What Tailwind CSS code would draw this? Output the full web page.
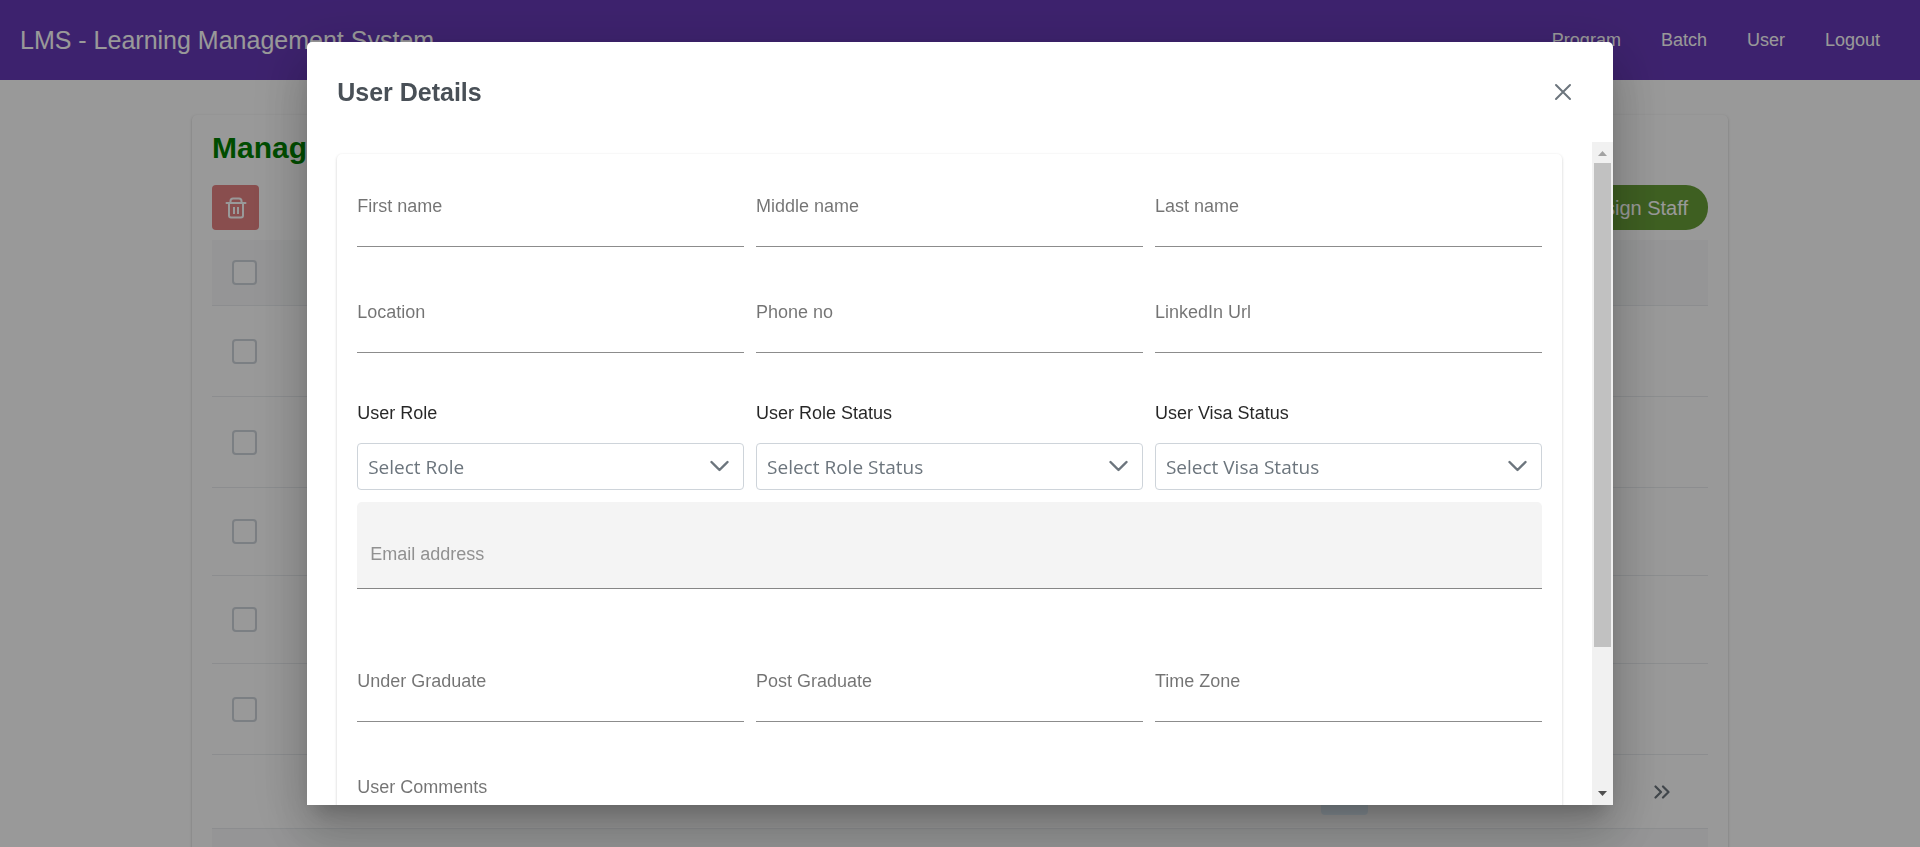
<!DOCTYPE html>
<html lang="en">
<head>
<meta charset="utf-8">
<title>LMS - Learning Management System</title>
<script src="https://cdn.jsdelivr.net/npm/@tailwindcss/browser@4"></script>
</head>
<body class="h-screen overflow-hidden bg-white font-['Liberation_Sans',Arial,sans-serif] text-lg text-black/85">

<header class="flex h-20 items-center justify-between bg-[#673ab7] pl-5 pr-10 text-white">
  <h1 class="text-[25px]">LMS - Learning Management System</h1>
  <nav class="flex gap-10">
    <a href="#program">Program</a>
    <a href="#batch">Batch</a>
    <a href="#user">User</a>
    <a href="#logout">Logout</a>
  </nav>
</header>

<main class="mx-auto mt-[35px] w-4/5 rounded-[5px] bg-white p-5 pb-10 shadow-[0_1px_3px_rgba(0,0,0,0.22)]">
  <h2 class="-mt-1 text-3xl leading-[34px] font-bold text-[#008000]">Manage User</h2>
  <div class="mt-5 flex justify-between">
    <button type="button" aria-label="Delete selected users" class="flex h-[45px] w-[47px] items-center justify-center rounded-[4px] bg-[#e58282] text-white">
      <svg class="size-[22px]" viewBox="0 0 22 22" fill="none" stroke="currentColor" stroke-width="2" stroke-linejoin="round" stroke-linecap="round">
        <path d="M1.500 6h19M4 6v12.500q0 2 2 2h10q2 0 2-2V6M5.500 6V4q0-2.500 2.500-2.500h6q2.500 0 2.500 2.500V6"/>
        <path stroke-linecap="butt" d="M9 10v7M13 10v7"/>
      </svg>
    </button>
    <button type="button" class="h-[45px] rounded-[22px] bg-[#689f38] px-5 text-xl text-white">+ Assign Staff</button>
  </div>

  <table class="mt-2.5 w-full border-separate border-spacing-0">
    <thead>
      <tr class="h-[66px] bg-[#f8f9fa]">
        <th class="border-b border-[#e9ecef] px-5 text-left"><input type="checkbox" aria-label="Select all users" class="block size-[25px] appearance-none rounded-[4px] border-2 border-[#ced4da] bg-white"></th>
      </tr>
    </thead>
    <tbody>
      <tr class="h-[91px]"><td class="border-b border-[#e9ecef] px-5"><input type="checkbox" aria-label="Select user 1" class="block size-[25px] appearance-none rounded-[4px] border-2 border-[#ced4da] bg-white"></td></tr>
      <tr class="h-[91px]"><td class="border-b border-[#e9ecef] px-5"><input type="checkbox" aria-label="Select user 2" class="block size-[25px] appearance-none rounded-[4px] border-2 border-[#ced4da] bg-white"></td></tr>
      <tr class="h-[88px]"><td class="border-b border-[#e9ecef] px-5"><input type="checkbox" aria-label="Select user 3" class="block size-[25px] appearance-none rounded-[4px] border-2 border-[#ced4da] bg-white"></td></tr>
      <tr class="h-[88px]"><td class="border-b border-[#e9ecef] px-5"><input type="checkbox" aria-label="Select user 4" class="block size-[25px] appearance-none rounded-[4px] border-2 border-[#ced4da] bg-white"></td></tr>
      <tr class="h-[91px]"><td class="border-b border-[#e9ecef] px-5"><input type="checkbox" aria-label="Select user 5" class="block size-[25px] appearance-none rounded-[4px] border-2 border-[#ced4da] bg-white"></td></tr>
    </tbody>
  </table>

  <div class="flex h-[74px] items-center justify-end border-b border-[#e9ecef] pr-[23px]">
    <button type="button" aria-label="Current page" class="mr-[270px] h-[47px] w-[47px] rounded-[4px] bg-[#e3f2fd]"></button>
    <button type="button" aria-label="Last page" class="flex h-[47px] w-[47px] items-center justify-center text-[#6c757d]">
      <svg class="h-3.5 w-4" viewBox="0 0 16 14" fill="none" stroke="currentColor" stroke-width="2.200" stroke-linecap="round" stroke-linejoin="round">
        <path d="M1.500 1.500L7 7l-5.500 5.500M9 1.500L14.500 7 9 12.500"/>
      </svg>
    </button>
  </div>
  <footer class="h-16 bg-[#f8f9fa]"></footer>
</main>

<div class="fixed inset-0 flex items-center justify-center bg-black/40">
  <section role="dialog" aria-modal="true" aria-labelledby="dialog-title" class="flex h-[90vh] w-[68vw] flex-col rounded-t-[5px] bg-white shadow-[0_14px_19px_-9px_rgba(0,0,0,0.2),0_30px_48px_4px_rgba(0,0,0,0.14),0_11px_58px_10px_rgba(0,0,0,0.12)]">
    <div class="flex h-[100px] shrink-0 items-start justify-between px-[30px] pt-[30px]">
      <h2 id="dialog-title" class="text-[25px] leading-10 font-bold text-[#495057]">User Details</h2>
      <button type="button" aria-label="Close" class="flex size-10 items-center justify-center text-[#6c757d]">
        <svg class="size-[18px]" viewBox="0 0 18 18" fill="none" stroke="currentColor" stroke-width="2" stroke-linecap="round"><path d="M2 2l14 14M16 2L2 16"/></svg>
      </button>
    </div>

    <div class="flex min-h-0 flex-1">
      <div class="flex-1 overflow-y-auto px-[30px] pt-3 pb-[30px] [scrollbar-width:none]">
        <form class="rounded-[5px] px-5 pt-10 pb-5 text-black/55 shadow-[0_1px_3px_rgba(0,0,0,0.2)]">
          <div class="grid grid-cols-3 gap-x-3 gap-y-[53px]">
            <div class="flex flex-col">
              <label for="first-name" class="leading-6">First name</label>
              <input id="first-name" type="text" class="h-[29px] border-b border-black/45 outline-none">
            </div>
            <div class="flex flex-col">
              <label for="middle-name" class="leading-6">Middle name</label>
              <input id="middle-name" type="text" class="h-[29px] border-b border-black/45 outline-none">
            </div>
            <div class="flex flex-col">
              <label for="last-name" class="leading-6">Last name</label>
              <input id="last-name" type="text" class="h-[29px] border-b border-black/45 outline-none">
            </div>
            <div class="flex flex-col">
              <label for="location" class="leading-6">Location</label>
              <input id="location" type="text" class="h-[29px] border-b border-black/45 outline-none">
            </div>
            <div class="flex flex-col">
              <label for="phone" class="leading-6">Phone no</label>
              <input id="phone" type="tel" class="h-[29px] border-b border-black/45 outline-none">
            </div>
            <div class="flex flex-col">
              <label for="linkedin" class="leading-6">LinkedIn Url</label>
              <input id="linkedin" type="url" class="h-[29px] border-b border-black/45 outline-none">
            </div>
          </div>

          <div class="mt-12 grid grid-cols-3 gap-3">
            <div>
              <label for="role" class="mb-[18px] block leading-6 text-black/85">User Role</label>
              <div class="relative">
                <select id="role" class="block h-[47px] w-full appearance-none rounded-[4px] border border-[#ced4da] bg-white px-2.5 pt-0.5 font-['Open_Sans',sans-serif] text-[19px] text-[#6c757d]"><option>Select Role</option></select>
                <svg class="pointer-events-none absolute top-[17px] right-[14px] h-3 w-5 text-[#6c757d]" viewBox="0 0 20 12" fill="none" stroke="currentColor" stroke-width="2.400" stroke-linecap="round" stroke-linejoin="round"><path d="M1.500 2l8 8 8-8"/></svg>
              </div>
            </div>
            <div>
              <label for="role-status" class="mb-[18px] block leading-6 text-black/85">User Role Status</label>
              <div class="relative">
                <select id="role-status" class="block h-[47px] w-full appearance-none rounded-[4px] border border-[#ced4da] bg-white px-2.5 pt-0.5 font-['Open_Sans',sans-serif] text-[19px] text-[#6c757d]"><option>Select Role Status</option></select>
                <svg class="pointer-events-none absolute top-[17px] right-[14px] h-3 w-5 text-[#6c757d]" viewBox="0 0 20 12" fill="none" stroke="currentColor" stroke-width="2.400" stroke-linecap="round" stroke-linejoin="round"><path d="M1.500 2l8 8 8-8"/></svg>
              </div>
            </div>
            <div>
              <label for="visa-status" class="mb-[18px] block leading-6 text-black/85">User Visa Status</label>
              <div class="relative">
                <select id="visa-status" class="block h-[47px] w-full appearance-none rounded-[4px] border border-[#ced4da] bg-white px-2.5 pt-0.5 font-['Open_Sans',sans-serif] text-[19px] text-[#6c757d]"><option>Select Visa Status</option></select>
                <svg class="pointer-events-none absolute top-[17px] right-[14px] h-3 w-5 text-[#6c757d]" viewBox="0 0 20 12" fill="none" stroke="currentColor" stroke-width="2.400" stroke-linecap="round" stroke-linejoin="round"><path d="M1.500 2l8 8 8-8"/></svg>
              </div>
            </div>
          </div>

          <input type="email" aria-label="Email address" placeholder="Email address" class="mt-3 block h-[87px] w-full rounded-t-[5px] border-b border-black/45 bg-[#f4f4f4] px-[13px] pt-[18px] outline-none placeholder:text-[#919191]">

          <div class="mt-20 grid grid-cols-3 gap-x-3">
            <div class="flex flex-col">
              <label for="under-graduate" class="leading-6">Under Graduate</label>
              <input id="under-graduate" type="text" class="h-[29px] border-b border-black/45 outline-none">
            </div>
            <div class="flex flex-col">
              <label for="post-graduate" class="leading-6">Post Graduate</label>
              <input id="post-graduate" type="text" class="h-[29px] border-b border-black/45 outline-none">
            </div>
            <div class="flex flex-col">
              <label for="time-zone" class="leading-6">Time Zone</label>
              <input id="time-zone" type="text" class="h-[29px] border-b border-black/45 outline-none">
            </div>
          </div>

          <div class="mt-[53px] flex flex-col">
            <label for="comments" class="leading-6">User Comments</label>
            <input id="comments" type="text" class="h-[29px] border-b border-black/45 outline-none">
          </div>
        </form>
      </div>

      <!-- Scroll track -->
      <div aria-hidden="true" class="flex w-[21px] flex-col items-center bg-[#f1f1f1]">
        <div class="flex h-[21px] shrink-0 items-center pt-0.5">
          <svg class="h-[5px] w-[9px] fill-[#a3a3a3]" viewBox="0 0 9 5"><path d="M0 5l4.500-5L9 5z"/></svg>
        </div>
        <div class="flex w-[17px] flex-1 flex-col">
          <div class="h-[78%] bg-[#c1c1c1]"></div>
        </div>
        <div class="flex h-[21px] shrink-0 items-center pb-0.5">
          <svg class="h-[5px] w-[9px] fill-[#505050]" viewBox="0 0 9 5"><path d="M0 0l4.500 5L9 0z"/></svg>
        </div>
      </div>
    </div>
  </section>
</div>

</body>
</html>
